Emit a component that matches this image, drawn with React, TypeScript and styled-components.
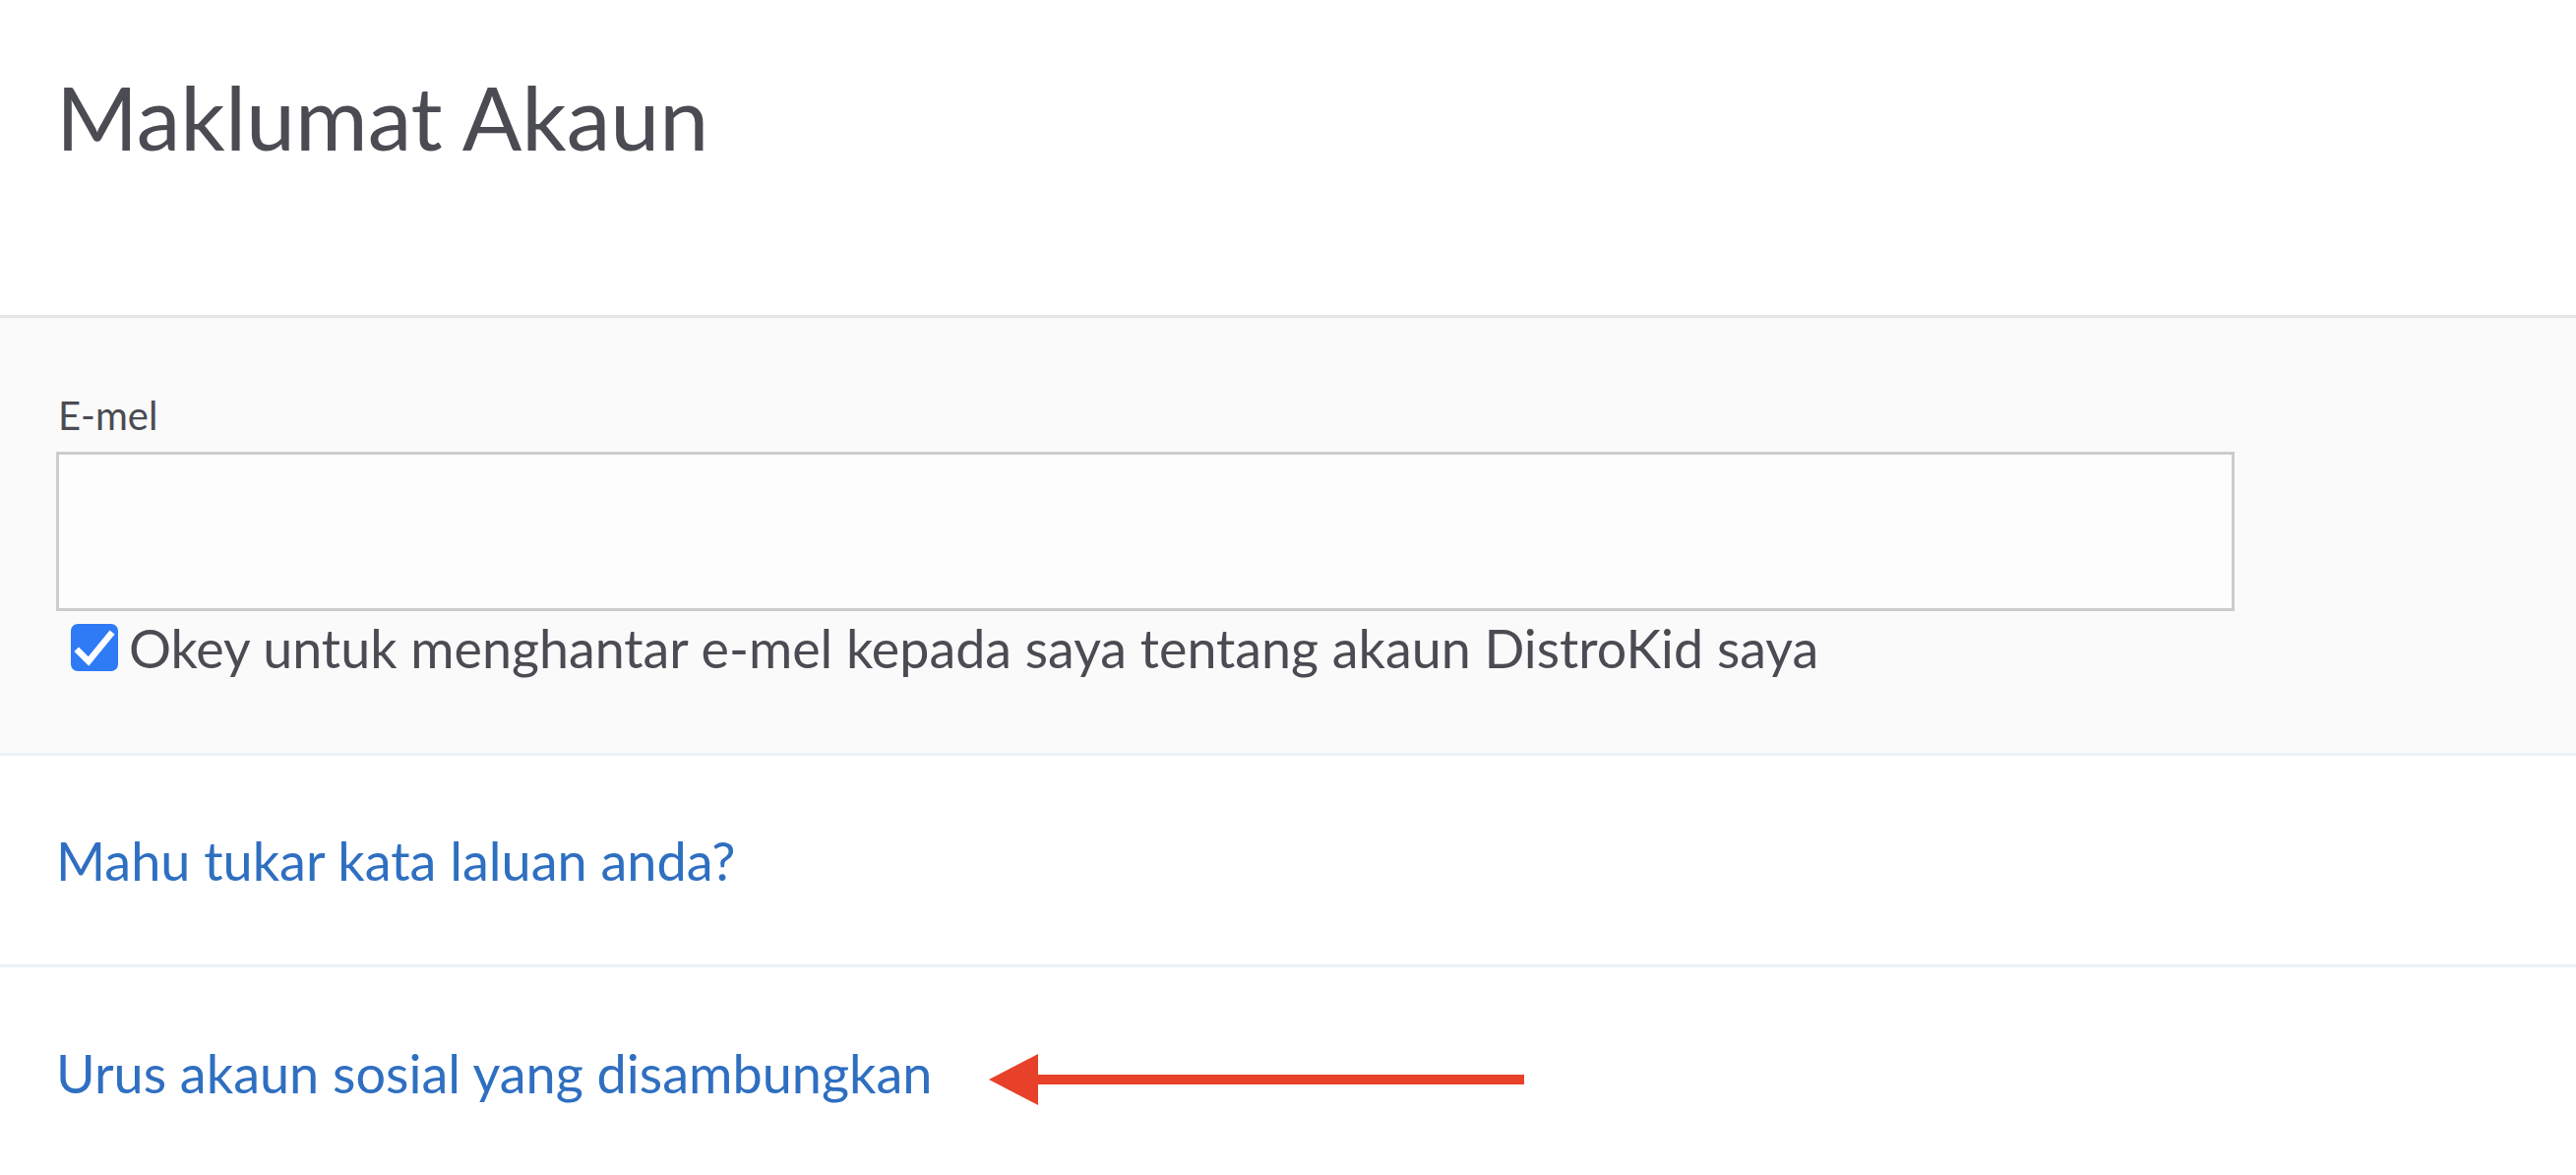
import styled, { createGlobalStyle } from "styled-components";

const GlobalStyle = createGlobalStyle`
  html, body {
    margin: 0;
    padding: 0;
    background: #ffffff;
    font-family: Lato, "Open Sans", "Liberation Sans", sans-serif;
  }
  * {
    box-sizing: border-box;
  }
`;

const Page = styled.div`
  display: flex;
  flex-direction: column;
  width: 100%;
  height: 1194px;
  overflow: hidden;
`;

const Header = styled.div`
  flex-shrink: 0;
  height: 323px;
  padding: 65px 0 0 57px;
  border-bottom: 3px solid #e5e5e5;
`;

const Title = styled.h1`
  margin: 0;
  font-size: 89.6px;
  line-height: 108px;
  font-weight: 400;
  color: #4b4c53;
`;

const FormPanel = styled.div`
  flex-shrink: 0;
  display: flex;
  flex-direction: column;
  height: 445px;
  padding: 75px 0 0 57px;
  background: #fafafa;
  border-bottom: 3px solid #ecf2fa;
`;

const FieldLabel = styled.label`
  font-size: 40px;
  line-height: 48px;
  color: #4b4c53;
  padding-left: 2px;
`;

const EmailInput = styled.input`
  margin-top: 13px;
  width: 2214px;
  height: 162px;
  border: 3px solid #cccccc;
  background: #fdfdfd;
  outline: none;
`;

const CheckRow = styled.label`
  display: flex;
  align-items: center;
  gap: 11px;
  margin-top: 5px;
  padding-left: 15px;
  font-size: 53.8px;
  line-height: 64px;
  color: #4b4c53;
`;

const CheckBox = styled.span`
  display: flex;
  align-items: center;
  justify-content: center;
  width: 48px;
  height: 48px;
  border-radius: 7px;
  background: #2f7af5;
  flex-shrink: 0;
`;

const LinkRow = styled.div<{ $last?: boolean }>`
  flex-shrink: 0;
  display: flex;
  align-items: center;
  gap: 58px;
  padding: ${({ $last }) => ($last ? "75px 0 80px 57px" : "74px 0 73px 57px")};
  border-bottom: ${({ $last }) => ($last ? "none" : "3px solid #ecf2fa")};
`;

const TextLink = styled.a`
  font-size: 54px;
  line-height: 65px;
  color: #2f6fc1;
  text-decoration: none;
  cursor: pointer;
`;

const ArrowMark = styled.svg`
  flex-shrink: 0;
  margin-top: 12px;
`;

const Arrow = () => (
  <ArrowMark width="544" height="52" viewBox="0 0 544 52">
    <polygon points="0,26 50,0 50,52" fill="#e8412a" />
    <rect x="48" y="21" width="496" height="10" fill="#e8412a" />
  </ArrowMark>
);

export default function App() {
  return (
    <>
      <GlobalStyle />
      <Page>
        <Header>
          <Title>Maklumat Akaun</Title>
        </Header>
        <FormPanel>
          <FieldLabel htmlFor="email">E-mel</FieldLabel>
          <EmailInput id="email" type="email" />
          <CheckRow>
            <CheckBox>
              <svg width="48" height="48" viewBox="0 0 48 48">
                <path
                  d="M8 28 L18 38 L40 11"
                  fill="none"
                  stroke="#ffffff"
                  strokeWidth="6.5"
                  strokeLinecap="square"
                  strokeLinejoin="miter"
                />
              </svg>
            </CheckBox>
            Okey untuk menghantar e-mel kepada saya tentang akaun DistroKid saya
          </CheckRow>
        </FormPanel>
        <LinkRow>
          <TextLink>Mahu tukar kata laluan anda?</TextLink>
        </LinkRow>
        <LinkRow $last>
          <TextLink>Urus akaun sosial yang disambungkan</TextLink>
          <Arrow />
        </LinkRow>
      </Page>
    </>
  );
}
